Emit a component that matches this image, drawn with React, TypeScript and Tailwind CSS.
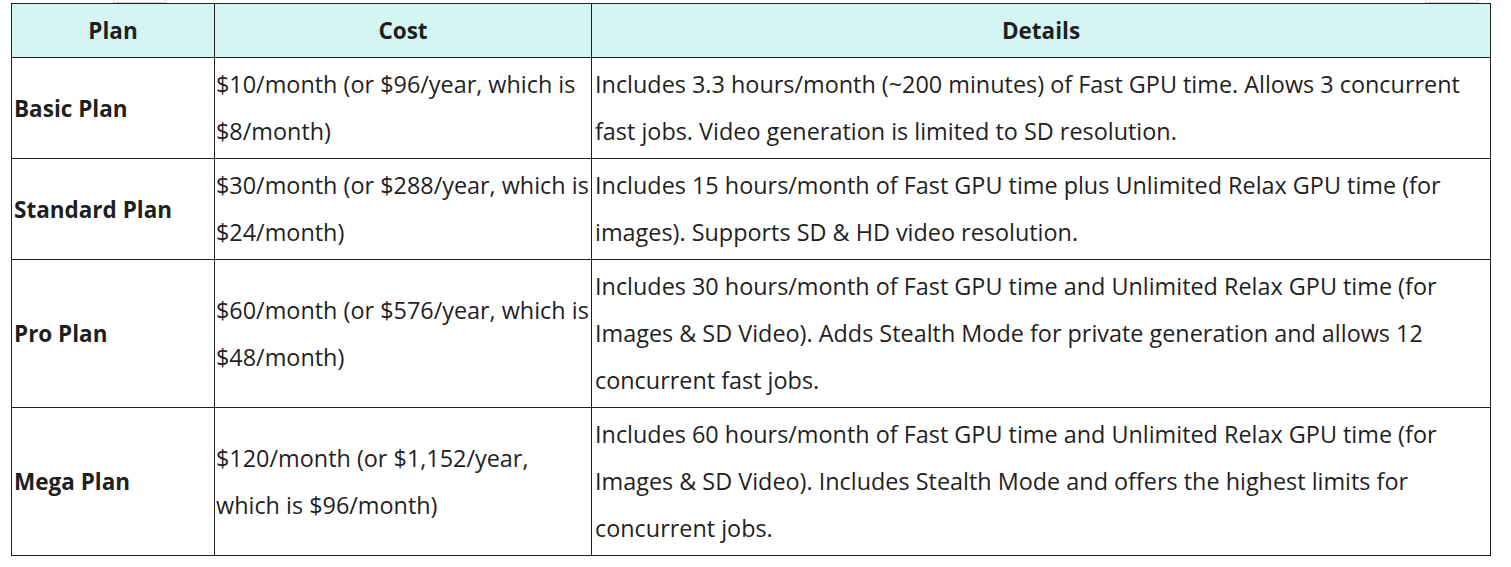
const rows = [
  {
    plan: "Basic Plan",
    cost: ["$10/month (or $96/year, which is", "$8/month)"],
    details: [
      "Includes 3.3 hours/month (~200 minutes) of Fast GPU time. Allows 3 concurrent",
      "fast jobs. Video generation is limited to SD resolution.",
    ],
  },
  {
    plan: "Standard Plan",
    cost: ["$30/month (or $288/year, which is", "$24/month)"],
    details: [
      "Includes 15 hours/month of Fast GPU time plus Unlimited Relax GPU time (for",
      "images). Supports SD & HD video resolution.",
    ],
  },
  {
    plan: "Pro Plan",
    cost: ["$60/month (or $576/year, which is", "$48/month)"],
    details: [
      "Includes 30 hours/month of Fast GPU time and Unlimited Relax GPU time (for",
      "Images & SD Video). Adds Stealth Mode for private generation and allows 12",
      "concurrent fast jobs.",
    ],
  },
  {
    plan: "Mega Plan",
    cost: ["$120/month (or $1,152/year,", "which is $96/month)"],
    details: [
      "Includes 60 hours/month of Fast GPU time and Unlimited Relax GPU time (for",
      "Images & SD Video). Includes Stealth Mode and offers the highest limits for",
      "concurrent jobs.",
    ],
  },
];

const Lines = ({ lines }: { lines: string[] }) => (
  <>
    {lines.map((l, i) => (
      <span key={i} className="block whitespace-nowrap">
        {l}
      </span>
    ))}
  </>
);

export default function App() {
  return (
    <div
      className="w-[1511px] h-[567px] bg-white text-[#1f1f1f]"
      style={{ fontFamily: '"Open Sans", "Noto Sans", sans-serif' }}
    >
      <div className="flex h-[3px]">
        <div className="w-[113px]" />
        <div className="w-[53px] border-x border-b border-[#d4d4d4]" />
        <div className="w-[1259px]" />
        <div className="w-[53px] border-x border-b border-[#d4d4d4]" />
      </div>
      <table className="ml-[11px] w-[1480px] table-fixed border-collapse text-[23.4px] leading-[47px]">
        <colgroup>
          <col className="w-[203px]" />
          <col className="w-[377px]" />
          <col />
        </colgroup>
        <thead>
          <tr className="h-[54px] bg-[#d5f5f3]">
            <th className="border border-[#1f1f1f] font-bold text-center text-[22.5px]">Plan</th>
            <th className="border border-[#1f1f1f] font-bold text-center text-[22.5px]">Cost</th>
            <th className="border border-[#1f1f1f] font-bold text-center text-[22.5px]">Details</th>
          </tr>
        </thead>
        <tbody>
          {rows.map((r) => (
            <tr key={r.plan}>
              <td className="border border-[#1f1f1f] px-[2px] py-[3px] font-bold text-[22.5px] align-middle">
                {r.plan}
              </td>
              <td className="border border-[#1f1f1f] px-[1px] py-[3px] align-middle">
                <Lines lines={r.cost} />
              </td>
              <td className="border border-[#1f1f1f] px-[3px] py-[3px] align-middle">
                <Lines lines={r.details} />
              </td>
            </tr>
          ))}
        </tbody>
      </table>
    </div>
  );
}
